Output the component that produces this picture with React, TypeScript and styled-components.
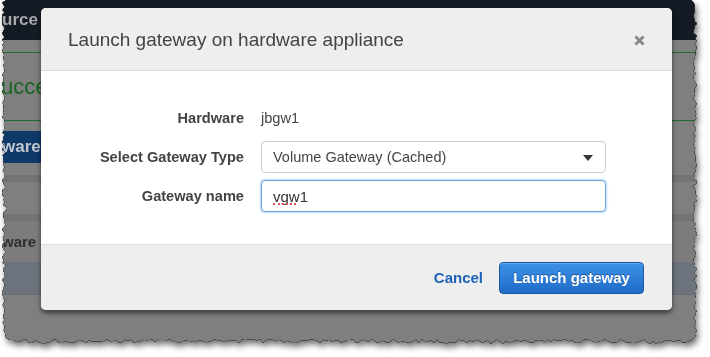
import React from 'react';
import styled, { createGlobalStyle } from 'styled-components';

const Global = createGlobalStyle`
  html, body { margin: 0; padding: 0; background: #ffffff; }
  body {
    width: 710px;
    height: 357px;
    overflow: hidden;
    font-family: "Liberation Sans", Arial, "Helvetica Neue", sans-serif;
  }
`;

function tornPolygon(): string {
  let s = 12345;
  const rnd = () => {
    s = (s * 16807) % 2147483647;
    return (s - 1) / 2147483646;
  };
  const pts: string[] = [];
  for (let y = 0; y <= 334; y += 2.5) {
    const big = rnd() < 0.12 ? rnd() * 2.5 : 0;
    pts.push(`${(2 + rnd() * 3 + big).toFixed(1)}px ${y.toFixed(1)}px`);
  }
  pts.push('6px 338px');
  pts.push('10px 340px');
  for (let x = 14; x <= 686; x += 3) {
    const big = rnd() < 0.12 ? rnd() * 3 : 0;
    pts.push(`${x}px ${(339 + rnd() * 4 + big).toFixed(1)}px`);
  }
  pts.push('692px 340px');
  for (let y = 336; y >= 8; y -= 2.5) {
    const big = rnd() < 0.12 ? rnd() * 3 : 0;
    pts.push(`${(693 + rnd() * 4 - big).toFixed(1)}px ${y.toFixed(1)}px`);
  }
  pts.push('694px 3px');
  pts.push('691px 0px');
  pts.push('0px 0px');
  return `polygon(${pts.join(',')})`;
}

const TORN = tornPolygon();

const Frame = styled.div`
  position: relative;
  width: 710px;
  height: 357px;
  filter: drop-shadow(0 0 0.5px #000) drop-shadow(0 0 0.4px #000)
    drop-shadow(2px 4px 3px rgba(0, 0, 0, 0.55));
`;

const Sheet = styled.div`
  position: relative;
  width: 700px;
  height: 349px;
  background: #7f7f7f;
  clip-path: ${TORN};
  display: flex;
  flex-direction: column;
  overflow: hidden;
`;

const TopBar = styled.div`
  height: 40px;
  flex: none;
  background: #131a23;
  display: flex;
  align-items: center;
  padding-left: 2px;
  color: #a7a9ac;
  font-weight: bold;
  font-size: 17px;
`;

const Alert = styled.div`
  margin-top: 12px;
  height: 67px;
  flex: none;
  border-top: 1px solid #1f6a2e;
  border-bottom: 1px solid #1f6a2e;
  display: flex;
  align-items: center;
  padding-left: 1px;
  color: #17651f;
  font-size: 22px;
`;

const DimButton = styled.div`
  margin-top: 10px;
  width: 140px;
  height: 32px;
  flex: none;
  background: #0f3969;
  display: flex;
  align-items: center;
  padding-left: 2px;
  color: #c2c8d0;
  font-weight: bold;
  font-size: 17px;
`;

const Band = styled.div<{ $top: number }>`
  margin-top: ${(p) => p.$top}px;
  height: 7px;
  flex: none;
  background: #737373;
`;

const HeaderRow = styled.div`
  height: 41px;
  flex: none;
  background: #7c7c7c;
  display: flex;
  align-items: center;
  padding-left: 2px;
  color: #2e2e2e;
  font-weight: bold;
  font-size: 15px;
`;

const SelectedRow = styled.div`
  height: 32px;
  flex: none;
  background: #6c737c;
  border-bottom: 1px solid #666b72;
`;

const Modal = styled.div`
  position: absolute;
  left: 41px;
  top: 8px;
  width: 631px;
  height: 302px;
  background: #ffffff;
  border-radius: 5px;
  box-shadow: 0 3px 5px rgba(0, 0, 0, 0.55);
  display: flex;
  flex-direction: column;
  overflow: hidden;
`;

const ModalHeader = styled.div`
  box-sizing: border-box;
  height: 63px;
  flex: none;
  background: #eeeeee;
  border-bottom: 1px solid #dcdcdc;
  display: flex;
  align-items: center;
  justify-content: space-between;
  padding: 2px 27px 0;
`;

const Title = styled.div`
  font-size: 19px;
  color: #444444;
`;

const CloseIcon = styled.svg`
  width: 11px;
  height: 11px;
  display: block;
`;

const ModalBody = styled.div`
  flex: 1;
  display: grid;
  grid-template-columns: 203px 345px;
  grid-auto-rows: 32px;
  column-gap: 17px;
  row-gap: 7px;
  padding-top: 31px;
  align-content: start;
`;

const Label = styled.div`
  display: flex;
  align-items: center;
  justify-content: flex-end;
  font-weight: bold;
  font-size: 14.6px;
  color: #444444;
`;

const Value = styled.div`
  display: flex;
  align-items: center;
  font-size: 14.6px;
  color: #444444;
`;

const SelectBox = styled.div`
  position: relative;
  box-sizing: border-box;
  height: 32px;
  border: 1px solid #cccccc;
  border-radius: 4px;
  background: #ffffff;
  display: flex;
  align-items: center;
  padding-left: 11px;
  font-size: 14.5px;
  color: #444444;
`;

const Caret = styled.span`
  position: absolute;
  right: 12px;
  top: 13px;
  width: 0;
  height: 0;
  border-left: 5px solid transparent;
  border-right: 5px solid transparent;
  border-top: 6px solid #333333;
`;

const InputWrap = styled.div`
  position: relative;
`;

const TextInput = styled.input`
  box-sizing: border-box;
  width: 345px;
  height: 32px;
  margin: 0;
  border: 1px solid #64a2e2;
  border-radius: 4px;
  box-shadow: 0 0 3px rgba(82, 153, 230, 0.7);
  outline: none;
  padding: 0 11px;
  font-family: "Liberation Sans", Arial, sans-serif;
  font-size: 15px;
  color: #333333;
  background: #ffffff;
`;

const SpellMark = styled.span`
  position: absolute;
  left: 12px;
  top: 23px;
  width: 23px;
  height: 0;
  border-bottom: 2px dotted #e0504a;
`;

const ModalFooter = styled.div`
  height: 65px;
  flex: none;
  background: #eeeeee;
  border-top: 1px solid #dcdcdc;
  display: flex;
  align-items: center;
  justify-content: flex-end;
  gap: 16px;
  padding-right: 28px;
`;

const CancelLink = styled.a`
  font-weight: bold;
  font-size: 15px;
  color: #1c62b6;
  text-decoration: none;
  cursor: pointer;
`;

const PrimaryButton = styled.button`
  box-sizing: border-box;
  width: 145px;
  height: 32px;
  border: 1px solid #1a58a4;
  border-radius: 4px;
  background: linear-gradient(#3d92e8, #1f6bc7);
  color: #ffffff;
  font-family: "Liberation Sans", Arial, sans-serif;
  font-weight: bold;
  font-size: 15px;
  text-shadow: 0 -1px 0 rgba(0, 0, 0, 0.35);
  box-shadow: inset 0 1px 0 rgba(255, 255, 255, 0.2);
  padding: 0;
  cursor: pointer;
`;

export default function App() {
  return (
    <>
      <Global />
      <Frame>
        <Sheet>
          <TopBar>urce</TopBar>
          <Alert>ucce</Alert>
          <DimButton>ware A</DimButton>
          <Band $top={12} />
          <Band $top={32} />
          <HeaderRow>ware</HeaderRow>
          <SelectedRow />
          <Modal>
            <ModalHeader>
              <Title>Launch gateway on hardware appliance</Title>
              <CloseIcon viewBox="0 0 11 11">
                <path d="M1.5 1.5 L9.5 9.5 M9.5 1.5 L1.5 9.5" stroke="#8a8a8a" strokeWidth="3" strokeLinecap="butt" />
              </CloseIcon>
            </ModalHeader>
            <ModalBody>
              <Label>Hardware</Label>
              <Value>jbgw1</Value>
              <Label>Select Gateway Type</Label>
              <SelectBox>
                Volume Gateway (Cached)
                <Caret />
              </SelectBox>
              <Label>Gateway name</Label>
              <InputWrap>
                <TextInput defaultValue="vgw1" spellCheck={false} />
                <SpellMark />
              </InputWrap>
            </ModalBody>
            <ModalFooter>
              <CancelLink>Cancel</CancelLink>
              <PrimaryButton>Launch gateway</PrimaryButton>
            </ModalFooter>
          </Modal>
        </Sheet>
      </Frame>
    </>
  );
}
